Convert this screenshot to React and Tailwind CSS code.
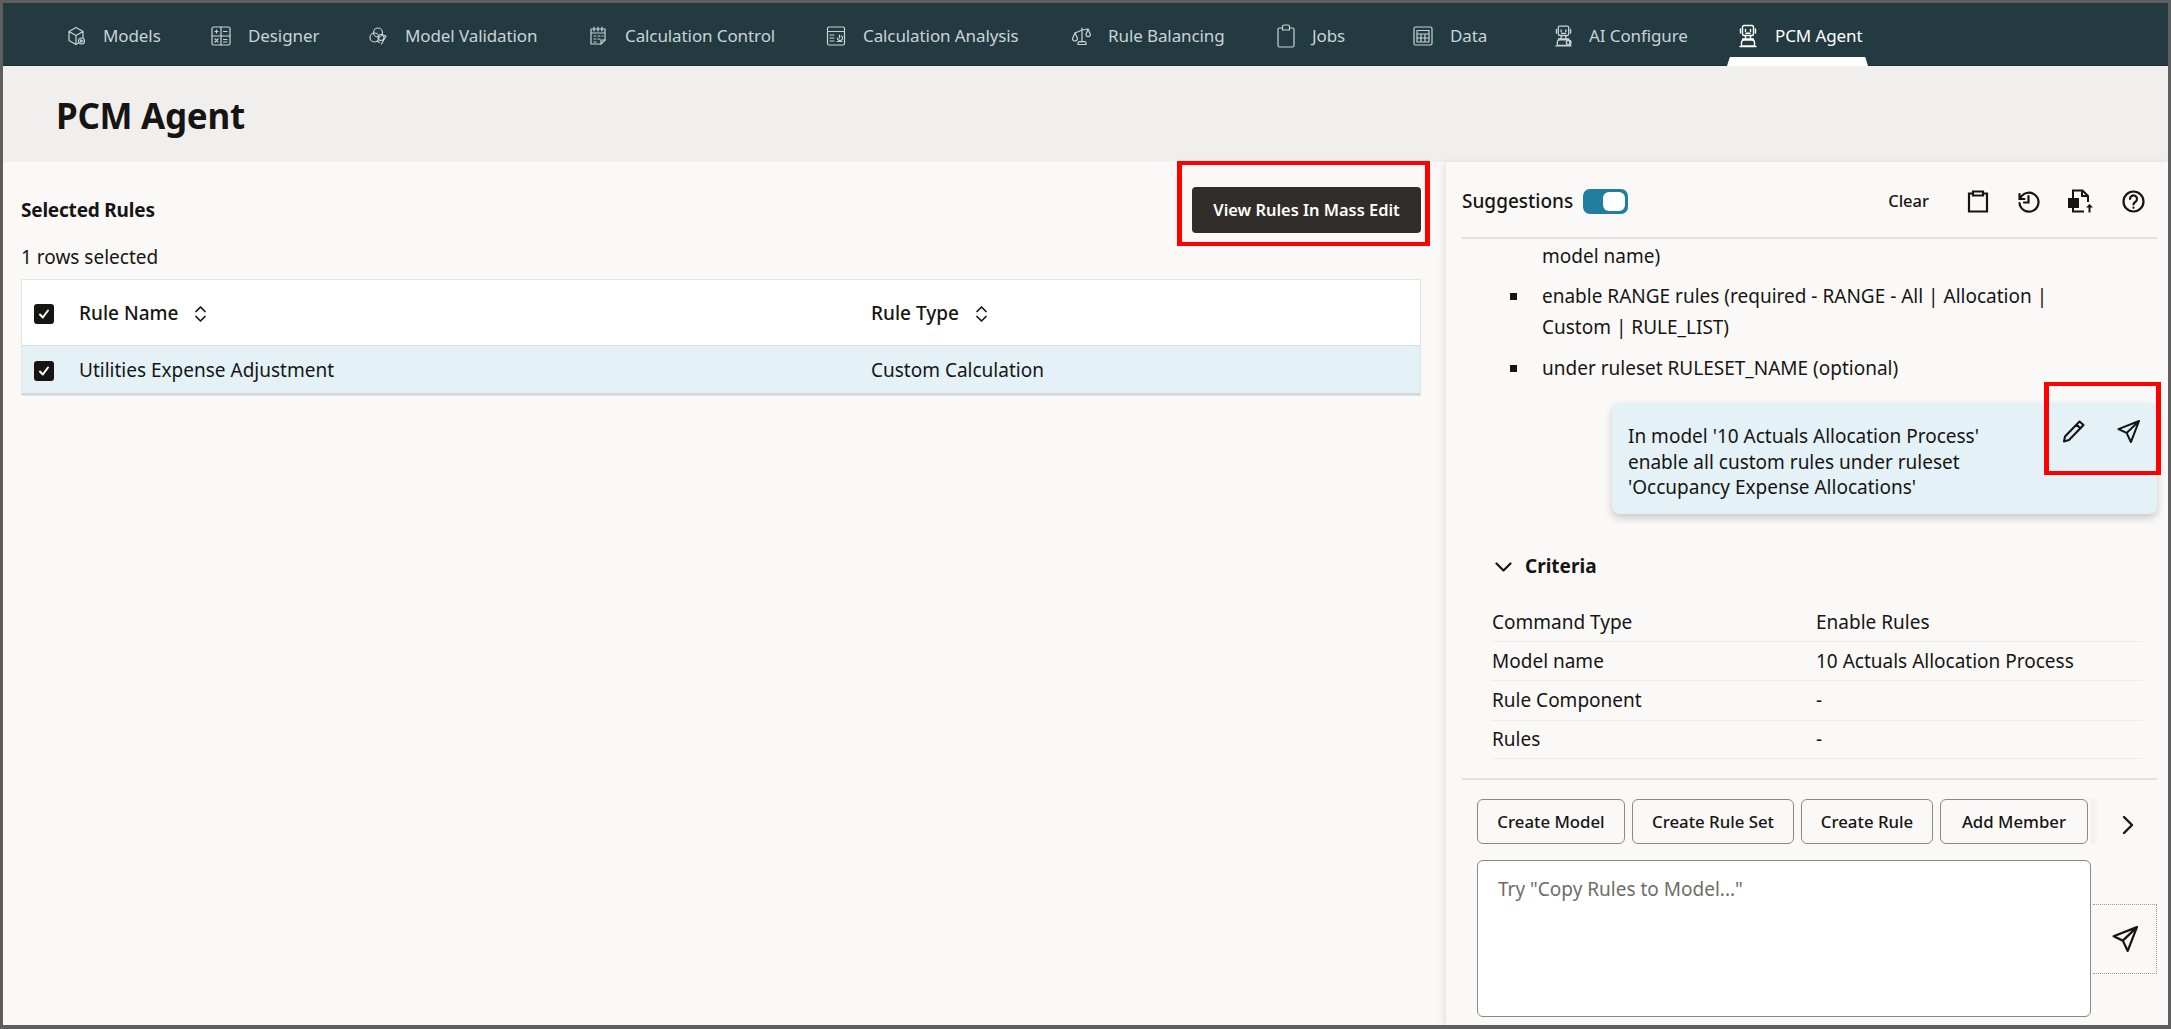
import React from 'react';

const Svg = ({ size = 20, w, h, vb = '0 0 20 20', sw = 1.2, children }) => (
    <svg width={w || size} height={h || size} viewBox={vb} fill="none" stroke="currentColor" strokeWidth={sw} strokeLinecap="round" strokeLinejoin="round">
        {children}
    </svg>
);

// nav icons
const ModelsIcon = () => (
    <Svg>
        <path d="M10 1.5 17 5.5v6M10 1.5 3 5.5v9l7 4 2-1.2M3 5.5l7 4 7-4M10 9.5v9" />
        <circle cx="15.5" cy="15" r="3" />
        <path d="M14.7 13.8v2.4l2-1.2z" />
    </Svg>
);
const DesignerIcon = () => (
    <Svg>
        <rect x="1" y="1" width="18" height="18" rx="1.5" />
        <path d="M10 1v18M1 10h18M4 5.500h3M5.500 4v3M12.500 5.500h3.500M4 13l3 3M7 13l-3 3M12.500 13.500h3.500M12.500 16h3.500" />
    </Svg>
);
const ValidationIcon = () => (
    <Svg>
        <circle cx="10" cy="6.500" r="4.500" />
        <circle cx="6.500" cy="11.500" r="4.500" />
        <path d="M13 8.500 18 10l-4.500 8M9 15l2.500 1.500" />
        <circle cx="13" cy="11.500" r="3" />
    </Svg>
);
const ControlIcon = () => (
    <Svg>
        <path d="M3 3h14v11l-4 4H3zM6 1v4M10 1v4M14 1v4M3 7h14M6 10h2M10 10h2M14 10h1M6 13h2M10 13h2M6 16h2" />
        <path d="M13 18v-4h4" />
    </Svg>
);
const AnalysisIcon = () => (
    <Svg>
        <rect x="1.500" y="1" width="17" height="18" rx="1.500" />
        <path d="M1.500 5.500h17M4 9h4M4 12h4M4 15h4M11 15.500h5M11.500 12a2.500 2.500 0 1 0 4 -2M13.500 12V9" />
    </Svg>
);
const BalanceIcon = () => (
    <Svg>
        <path d="M11 2v14M7 18.500h8v-1.300a1.500 1.500 0 0 0-1.500-1.500h-5A1.500 1.500 0 0 0 7 17.200zM4 7l7-3 6-1" />
        <path d="M4 7 1.500 12.500a2.500 2.500 0 0 0 5 0zM17 3l-2 5.500a2.200 2.200 0 0 0 4.400 0z" />
    </Svg>
);
const JobsIcon = () => (
    <Svg w={18} h={24} vb="0 0 18 24">
        <path d="M5.500 4H2.500A1.500 1.500 0 0 0 1 5.500v16A1.500 1.500 0 0 0 2.500 23h13a1.500 1.500 0 0 0 1.500-1.500v-16A1.500 1.500 0 0 0 15.500 4h-3" />
        <path d="M5.500 6V2.500A1.500 1.500 0 0 1 7 1h4a1.500 1.500 0 0 1 1.500 1.500V6z" />
    </Svg>
);
const DataIcon = () => (
    <Svg>
        <rect x="1" y="1" width="18" height="18" rx="1.500" />
        <path d="M4 4.500h12v11.500H4zM4 8h12M4 12h12M8 8v8M12 8v8" />
    </Svg>
);
const RobotIcon = ({ gear }) => (
    <Svg w={18} h={24} vb="0 0 18 24" sw={1.4}>
        <rect x="3.500" y="1.500" width="11" height="10" rx="1.500" />
        <path d="M1.500 5v4M16.500 5v4M6.500 7.500V5.500M11.500 7.500V5.500M7 9.300h4M6.500 11.500v3.500M11.500 11.500v3.500M3.500 15h11M2.500 22v-3.500A2.500 2.500 0 0 1 5 16h8a2.500 2.500 0 0 1 2.500 2.500V22zM1 22.500h16" />
        {gear && <circle cx="14.500" cy="19" r="2.500" />}
    </Svg>
);

const SendIcon = ({ w = 23, h = 23 }) => (
    <svg width={w} height={h} viewBox="0 0 24 24" fill="none" stroke="currentColor" strokeWidth="2.100" strokeLinejoin="round" strokeLinecap="round">
        <path d="M23 1 1.500 9.500l8.500 4 4.500 9.500zM23 1 10 13.500" />
    </svg>
);
const PencilIcon = () => (
    <svg width="23" height="23" viewBox="0 0 23 23" fill="none" stroke="currentColor" strokeWidth="2.100" strokeLinejoin="round" strokeLinecap="round">
        <path d="M17.500 1.500 21.500 5 7 20 2 21.500 3 16.500zM14.500 4.500l4 4" />
    </svg>
);
const SortIcon = () => (
    <svg width="13" height="18" viewBox="0 0 13 18" fill="none" stroke="currentColor" strokeWidth="1.700" strokeLinecap="round" strokeLinejoin="round">
        <path d="M2 6.500 6.500 2 11 6.500M2 11.500 6.500 16 11 11.500" />
    </svg>
);
const Check = () => (
    <span className="flex h-[20px] w-[20px] items-center justify-center rounded-[3px] bg-[#161513]">
        <svg width="14" height="14" viewBox="0 0 14 14" fill="none" stroke="white" strokeWidth="2" strokeLinecap="round" strokeLinejoin="round">
            <path d="M3 7.500 5.800 10.500 11 3.500" />
        </svg>
    </span>
);

const navItems = [
    { label: 'Models', icon: <ModelsIcon />, width: 'w-[145px]', iconBox: 'w-[20px]' },
    { label: 'Designer', icon: <DesignerIcon />, width: 'w-[157px]', iconBox: 'w-[20px]' },
    { label: 'Model Validation', icon: <ValidationIcon />, width: 'w-[220px]', iconBox: 'w-[20px]' },
    { label: 'Calculation Control', icon: <ControlIcon />, width: 'w-[238px]', iconBox: 'w-[20px]' },
    { label: 'Calculation Analysis', icon: <AnalysisIcon />, width: 'w-[245px]', iconBox: 'w-[20px]' },
    { label: 'Rule Balancing', icon: <BalanceIcon />, width: 'w-[206px]', iconBox: 'w-[20px]' },
    { label: 'Jobs', icon: <JobsIcon />, width: 'w-[136px]', iconBox: 'w-[18px]' },
    { label: 'Data', icon: <DataIcon />, width: 'w-[142px]', iconBox: 'w-[20px]' },
    { label: 'AI Configure', icon: <RobotIcon gear />, width: 'w-[183px]', iconBox: 'w-[17px]' },
    { label: 'PCM Agent', icon: <RobotIcon />, width: 'w-[177px]', iconBox: 'w-[20px]', active: true },
];

const criteria = [
    ['Command Type', 'Enable Rules', 'h-[39px]'],
    ['Model name', '10 Actuals Allocation Process', 'h-[39px]'],
    ['Rule Component', '-', 'h-[40px]'],
    ['Rules', '-', 'h-[38px]'],
];

const chips = [
    ['Create Model', 'w-[148px]'],
    ['Create Rule Set', 'w-[162px]'],
    ['Create Rule', 'w-[132px]'],
    ['Add Member', 'w-[148px]'],
];

export default function App() {
    return (
        <div className="flex h-[1029px] w-[2171px] flex-col overflow-hidden border-x-[3px] border-b-4 border-t-[3px] border-[#5e5e5e] bg-[#fbf9f8] font-['Noto_Sans',sans-serif] text-[19px] text-[#161513]">
            {/* top nav */}
            <nav className="flex h-[63px] shrink-0 items-stretch border-b border-[#1b2f33] bg-[#233a40] pl-[38px]">
                {navItems.map((item) => (
                    <div key={item.label} className={`relative flex items-center pl-[25px] pt-[4px] ${item.width} ${item.active ? 'text-white' : 'text-[#c9d3d6]'}`}>
                        <span className={`flex shrink-0 justify-center ${item.iconBox}`}>{item.icon}</span>
                        <span className="ml-[17px] whitespace-nowrap text-[17px] tracking-[-0.1px]">{item.label}</span>
                        {item.active && (
                            <span className="absolute bottom-[-1px] left-[14px] right-[22px] h-[9px] bg-white [clip-path:polygon(2%_0,98%_0,100%_100%,0_100%)]" />
                        )}
                    </div>
                ))}
            </nav>

            {/* page title */}
            <header className="flex h-[96px] shrink-0 items-center bg-[#f1efed] pl-[53px] pt-[4px]">
                <h1 className="text-[35px] font-bold tracking-[-0.3px]">PCM Agent</h1>
            </header>

            <div className="flex min-h-0 flex-1">
                {/* selected rules */}
                <main className="w-[1443px] shrink-0 pl-[18px] pr-[25px] pt-[25px]">
                    <div className="flex h-[46px] items-center justify-between">
                        <h2 className="pt-[1px] text-[19px] font-bold tracking-[-0.2px]">Selected Rules</h2>
                        <div className="relative">
                            <button className="h-[46px] w-[229px] rounded-[4px] bg-[#312d2a] text-[16.400px] font-semibold text-white">
                                View Rules In Mass Edit
                            </button>
                            <span className="absolute -left-[15px] -right-[9px] -top-[26px] -bottom-[13px] border-x-[5px] border-y-4 border-[#ff0000]" />
                        </div>
                    </div>
                    <p className="mt-[11px] leading-[26px]">1 rows selected</p>
                    <div className="mt-[9px] w-[1400px] border border-[#e4e3e1] bg-white">
                        <div className="grid h-[66px] grid-cols-[57px_792px_1fr] items-center border-b border-[#dfdedc] pt-[2px] font-medium">
                            <span className="pl-[12px]"><Check /></span>
                            <span className="flex items-center gap-[16px]">Rule Name <SortIcon /></span>
                            <span className="flex items-center gap-[16px]">Rule Type <SortIcon /></span>
                        </div>
                        <div className="grid h-[49px] grid-cols-[57px_792px_1fr] items-center border-b-2 border-[#cfd8dd] bg-[#e4f1f7] pt-[2px]">
                            <span className="pl-[12px]"><Check /></span>
                            <span>Utilities Expense Adjustment</span>
                            <span>Custom Calculation</span>
                        </div>
                    </div>
                </main>

                {/* agent panel */}
                <aside className="flex min-w-0 flex-1 flex-col pl-[16px] pr-[11px] shadow-[-3px_0_6px_rgba(0,0,0,0.08)]">
                    <div className="flex h-[77px] shrink-0 items-center border-b-2 border-[#e2e1df] pt-[3px]">
                        <span className="w-[121px] whitespace-nowrap font-medium">Suggestions</span>
                        <span className="flex h-[25px] w-[45px] items-center justify-end rounded-[7px] bg-[#227e9e] pr-[3px]">
                            <span className="h-[19px] w-[22px] rounded-[6px] bg-white" />
                        </span>
                        <span className="ml-auto text-[16.500px] font-medium">Clear</span>
                        <span className="ml-[38px] flex items-center gap-[28px] pr-[12px]">
                            <svg width="22" height="23" viewBox="0 0 22 23" fill="none" stroke="currentColor" strokeWidth="2.200">
                                <path d="M6 3.500H2v18h18v-18h-4M6 1.500h10v4H6z" />
                            </svg>
                            <svg width="23" height="23" viewBox="0 0 23 23" fill="none" stroke="currentColor" strokeWidth="2.200" strokeLinecap="round">
                                <path d="M2.500 4v5h5M3 9a9.500 9.500 0 1 1-.5 4M11.500 6v6.500H7" />
                            </svg>
                            <svg width="26" height="24" viewBox="0 0 26 24" fill="none" stroke="currentColor" strokeWidth="2">
                                <path d="M5 9V1.500h9.500l5.500 5.500V13M14 1.500V7h6M5 18v4.500h11" />
                                <rect x="1" y="10" width="9" height="8" fill="currentColor" />
                                <path d="M21.500 23.500V17" />
                                <path d="M18 18.500l3.500-3.500 3.500 3.500z" fill="currentColor" stroke="none" />
                            </svg>
                            <svg width="23" height="23" viewBox="0 0 23 23" fill="none" stroke="currentColor" strokeWidth="2.200" strokeLinecap="round">
                                <circle cx="11.500" cy="11.500" r="10" />
                                <path d="M8 9a3.500 3.500 0 1 1 5.500 2.800c-1.400.9-2 1.400-2 2.700M11.500 17.500v.3" />
                            </svg>
                        </span>
                    </div>

                    <div className="min-h-0 flex-1">
                        <p className="mt-[2px] pl-[80px] leading-[31px]">model name)</p>
                        <ul className="mt-[9px] space-y-[10px] pl-[48px] leading-[31px]">
                            <li className="flex">
                                <span className="mt-[12px] h-[7px] w-[7px] shrink-0 bg-[#161513]" />
                                <span className="ml-[25px] w-[560px]">enable RANGE rules (required - RANGE - All | Allocation | Custom | RULE_LIST)</span>
                            </li>
                            <li className="flex">
                                <span className="mt-[12px] h-[7px] w-[7px] shrink-0 bg-[#161513]" />
                                <span className="ml-[25px]">under ruleset RULESET_NAME (optional)</span>
                            </li>
                        </ul>

                        <div className="relative ml-[150px] mt-[19px] h-[111px] rounded-[8px] bg-[#e4f1f7] pl-[16px] pt-[21px] leading-[25.500px] shadow-[0_4px_8px_rgba(0,0,0,0.2)]">
                            <p>In model '10 Actuals Allocation Process'</p>
                            <p>enable all custom rules under ruleset</p>
                            <p>'Occupancy Expense Allocations'</p>
                            <span className="absolute right-[-4px] top-[-21px] flex h-[93px] w-[117px] gap-[32px] border-x-[5px] border-y-4 border-[#ff0000] pl-[13px] pt-[34px]">
                                <PencilIcon />
                                <SendIcon />
                            </span>
                        </div>

                        <div className="mt-[40px] flex h-[24px] items-center pl-[33px] pt-[1px] font-bold">
                            <svg width="17" height="10" viewBox="0 0 17 10" fill="none" stroke="currentColor" strokeWidth="2.200" strokeLinecap="round" strokeLinejoin="round">
                                <path d="M1.500 1.500 8.500 8.500 15.500 1.500" />
                            </svg>
                            <span className="ml-[13px]">Criteria</span>
                        </div>

                        <div className="ml-[30px] mr-[15px] mt-[25px]">
                            {criteria.map(([name, value, height]) => (
                                <div key={name} className={`grid grid-cols-[324px_1fr] items-center border-b border-[#eeedeb] ${height}`}>
                                    <span>{name}</span>
                                    <span>{value}</span>
                                </div>
                            ))}
                        </div>
                    </div>

                    <div className="h-[247px] shrink-0 border-t-2 border-[#e2e1df] pl-[15px] pt-[19px]">
                        <div className="flex h-[45px] items-center">
                            <div className="flex w-[611px] gap-[7px]">
                                {chips.map(([label, width]) => (
                                    <button key={label} className={`h-[45px] shrink-0 rounded-[6px] border border-[#8b8987] text-[16.800px] font-medium ${width}`}>
                                        {label}
                                    </button>
                                ))}
                            </div>
                            <span className="ml-[3px] h-[45px] w-[8px] bg-gradient-to-r from-[#efeeec] to-transparent" />
                            <svg className="ml-[23px] mt-[6px]" width="12" height="20" viewBox="0 0 12 20" fill="none" stroke="currentColor" strokeWidth="2.400" strokeLinecap="round" strokeLinejoin="round">
                                <path d="M2 2l8 8-8 8" />
                            </svg>
                        </div>
                        <div className="mt-[16px] flex items-center">
                            <div className="h-[157px] w-[614px] shrink-0 rounded-[6px] border border-[#8b8987] bg-white px-[20px] py-[14px] text-[#6f6c69]">
                                Try "Copy Rules to Model..."
                            </div>
                            <button className="ml-[2px] flex h-[70px] w-[66px] items-center justify-center border-y border-r border-dotted border-[#9a9a9a]">
                                <SendIcon w={26} h={26} />
                            </button>
                        </div>
                    </div>
                </aside>
            </div>
        </div>
    );
}
